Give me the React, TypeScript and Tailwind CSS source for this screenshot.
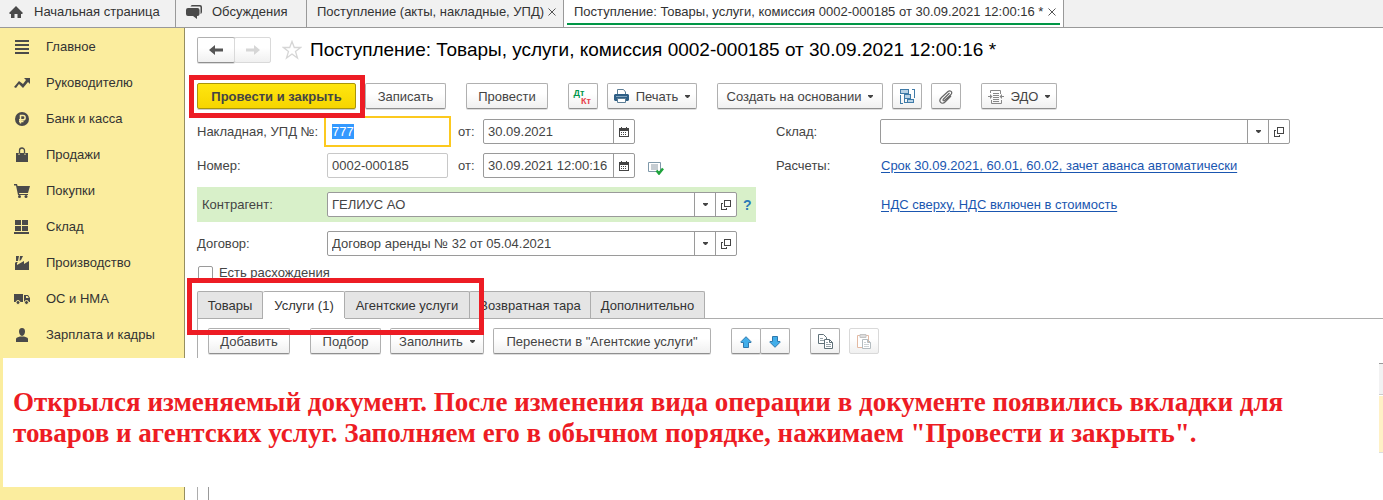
import { useEffect, useRef } from "react";
import type { ReactNode } from "react";
import clsx from "clsx";

/* ---------- icons ---------- */

const sectionIcons: Record<string, ReactNode> = {
  main: <path d="M1 1h14v2H1zM1 5h14v2H1zM1 9h14v2H1zM1 13h14v2H1z" />,
  chart: (
    <path d="M0 12l5-6 4 3 3-4-2-2h6v6l-2-2-5 6-4-4-3 4z" />
  ),
  ruble: (
    <>
      <circle cx="8" cy="8" r="7" />
      <path
        d="M6.5 12.5V4.5h2.5a2 2 0 0 1 0 4.300H5M5 10.500h4.500"
        fill="none"
        stroke="#fbed9e"
        strokeWidth="1.500"
      />
    </>
  ),
  bag: (
    <>
      <path d="M2 6h12v9H2z" />
      <path d="M5.500 8V3.500a2 2 0 0 1 5 0V8" fill="none" stroke="#4a4a4a" strokeWidth="1.300" />
      <path d="M5 6.500v1.500M11 6.500v1.500" stroke="#fbed9e" />
    </>
  ),
  cart: (
    <>
      <path d="M0 1h3l.6 2H16l-2 7H5l.3 1H14v1H4L2 2.500H0z" />
      <circle cx="5.500" cy="13.500" r="1.500" />
      <circle cx="12" cy="13.500" r="1.500" />
    </>
  ),
  store: <path d="M1 1h6v5H1zM8 1h6v5H8zM1 7h6v5H1zM8 7h6v5H8zM0 13h15v2H0z" />,
  factory: <path d="M1 15V8l1-1h2l-1 1v2l7-4v3l5-3v9zM2 1h3l-1 5H2zM6 1h3L7 5 5.500 6z" />,
  truck: (
    <>
      <path d="M0 3h9v8H0zM10 4h4l2 3v4h-6z" />
      <path d="M12 5h1.500l1.300 2H12z" fill="#fbed9e" />
      <circle cx="4" cy="11.500" r="2" stroke="#fbed9e" />
      <circle cx="12.500" cy="11.500" r="2" stroke="#fbed9e" />
    </>
  ),
  person: (
    <>
      <path d="M8 1c2.200 0 3 1.500 3 3.500S9.800 9 8 9 5 6.500 5 4.500 5.800 1 8 1z" />
      <path d="M2 15v-3c0-1.500 2-2 4-2.500h4c2 .5 4 1 4 2.500v3z" />
    </>
  ),
};

const HomeIcon = () => (
  <svg className="h-4 w-4 shrink-0" viewBox="0 0 16 16" fill="#4a4a4a">
    <path d="M8 2l7 7-1 1h-1v4H9.500v-4h-3v4H3v-4H2L1 9z" />
  </svg>
);

const ChatIcon = () => (
  <svg className="h-4 w-4 shrink-0" viewBox="0 0 16 16" fill="#4a4a4a">
    <path d="M6 1h8q2 0 2 2v5q0 1.500-1.500 2V3.500q0-1-1-1H4.500Q5 1 6 1z" />
    <path d="M2 4h9.500q2 0 2 2v4q0 2-2 2H11v3l-4-3H2q-2 0-2-2V6q0-2 2-2z" />
  </svg>
);

const ArrowIcon = ({ flip, color }: { flip?: boolean; color: string }) => (
  <svg className={clsx("h-3 w-[14px]", flip && "rotate-180")} viewBox="0 0 14 12" fill={color}>
    <path d="M0 6l6-5v3.500h8v3H6V11z" />
  </svg>
);

const StarIcon = () => (
  <svg className="h-5 w-5" viewBox="0 0 20 20" fill="none" stroke="#d6d6d6" strokeWidth="1.300">
    <path d="M10 1.500l2.300 6h6.200l-5 4 2 6.500-5.500-4L4.500 18l2-6.500-5-4h6.200z" />
  </svg>
);

const Caret = () => (
  <svg className="h-[3px] w-[5px] shrink-0" viewBox="0 0 5 3" fill="#444">
    <path d="M0 0h5v1L3 3H2L0 1z" />
  </svg>
);

const OpenIcon = () => (
  <svg className="h-[10px] w-[10px]" viewBox="0 0 10 10" fill="none" stroke="#444" shapeRendering="crispEdges">
    <path d="M3.500 .5h6v6h-6zM2 3.500H.5v6h5V8" />
  </svg>
);

const CalendarIcon = () => (
  <svg className="h-[10px] w-[10px]" viewBox="0 0 10 10" shapeRendering="crispEdges">
    <path d="M.5 1.500h9v8h-9z" fill="#fff" stroke="#444" />
    <path d="M0 1h10v3H0zM2 0h1v1H2zM7 0h1v1H7z" fill="#444" />
    <path d="M2 5h1v1H2zM4 5h1v1H4zM6 5h1v1H6zM2 7h1v1H2zM4 7h1v1H4zM6 7h1v1H6z" fill="#444" />
  </svg>
);

const PrinterIcon = () => (
  <svg className="h-[15px] w-[15px] shrink-0" viewBox="0 0 15 15">
    <path d="M3.500 5V.5h6L11.500 3v3" fill="#fff" stroke="#5b7d95" />
    <path d="M1 5h13l1 1v5l-1 1H1l-1-1V6z" fill="#2f5f86" />
    <path d="M2 7.500h11" stroke="#7fa3bf" />
    <path d="M3.500 9.500h8v4h-8z" fill="#fff" stroke="#5b7d95" />
  </svg>
);

const StructureIcon = () => (
  <svg className="h-[15px] w-[15px]" viewBox="0 0 15 15" fill="#b9d3e6" stroke="#3f7ba8" shapeRendering="crispEdges">
    <path d="M.5 6v8.500H3M12 .5h2.500V9M4.500 4v9.500H8M7 4v3" fill="none" />
    <path d="M.5.500h8v4h-8zM4.500 5.500h6v4h-6zM7.500 10.500h6v3h-6z" />
  </svg>
);

const ClipIcon = () => (
  <svg className="h-[14px] w-[14px]" viewBox="0 0 14 14" fill="none" stroke="#666" strokeWidth="1.200">
    <path d="M10.500 3L4.500 9c-1 1-.2 2.300 1 1.500l6.500-6c2-2.500-.8-4.800-3-3L2.500 7.500c-4 4 .5 7.500 3.500 4.500l6-6" />
  </svg>
);

const ExchangeIcon = () => (
  <svg className="h-4 w-4 shrink-0" viewBox="0 0 16 16" fill="none" stroke="#888">
    <path d="M2.500 4V1.500h10V5M13.500 11v3.500h-10V11M5 4.500h6M5 6.500h6M5 8.500h6M5 10.500h6M5 12.500h6" />
    <path d="M0 7.500h3M13 7.500h3" />
    <path d="M2 5l2.500 2.500L2 10zM14 5l-2.500 2.500L14 10z" fill="#888" stroke="none" />
  </svg>
);

const PostedIcon = () => (
  <svg className="h-[14px] w-4" viewBox="0 0 16 14" fill="none">
    <path d="M.5 1.500h12v9H.5z" stroke="#7f99aa" />
    <path d="M3 4h7M3 6h7M3 8h7" stroke="#8b9aa5" />
    <path d="M8.500 9.500l2.500 3L15 7.500" stroke="#1fa33c" strokeWidth="2.500" />
  </svg>
);

const BlueArrow = ({ down }: { down?: boolean }) => (
  <svg className={clsx("h-3 w-3", down && "rotate-180")} viewBox="0 0 12 12" fill="#41aeea" stroke="#2f78ad">
    <path d="M6 .7l5 5v.8H8.500v5h-5v-5H1v-.8z" />
  </svg>
);

const CopyIcon = () => (
  <svg className="h-[15px] w-[15px]" viewBox="0 0 15 15" fill="#fff" stroke="#5f7078">
    <path d="M.5.5h5l3 3v6h-8z" />
    <path d="M2 4.500h3M2 6.500h4" stroke="#98a4aa" />
    <path d="M6.500 5.500h5l3 3v6h-8zM11.500 5.500v3h3" />
    <path d="M8 8.500h2M8 10.500h5M8 12.500h5" stroke="#98a4aa" />
  </svg>
);

const PasteIcon = () => (
  <svg className="h-[15px] w-[15px]" viewBox="0 0 15 15" fill="#fff">
    <path d="M.5 1.500h11v12H.5z" stroke="#e3b9a2" />
    <path d="M3 .5h6v3H3z" fill="#ddd" stroke="#c4c4c4" />
    <path d="M5.500 5.500h5l3 3v6h-8zM10.500 5.500v3h3" stroke="#b4bcc0" />
    <path d="M7 8.500h2M7 10.500h5M7 12.500h5" stroke="#cdd2d5" />
  </svg>
);

/* ---------- controls ---------- */

type ButtonProps = {
  children: ReactNode;
  className?: string;
  label?: string;
  disabled?: boolean;
};

const Button = ({ children, className, label, disabled }: ButtonProps) => (
  <button
    type="button"
    aria-label={label}
    disabled={disabled}
    className={clsx(
      "flex h-[26px] shrink-0 items-center justify-center whitespace-nowrap rounded-xs border bg-linear-to-b from-white from-40% to-[#f0f0f0] pt-px",
      disabled ? "border-[#d9d9d9]" : "border-[#b0b0b0] border-b-[#8f8f8f] shadow-[0_1px_0_#ddd]",
      className
    )}
  >
    {children}
  </button>
);

type FieldProps = {
  id: string;
  value?: string;
  className?: string;
  buttons: { label: string; icon: ReactNode }[];
};

const Field = ({ id, value = "", className, buttons }: FieldProps) => (
  <div className={clsx("flex h-[25px] rounded-xs border border-[#9a9a9a] bg-white", className)}>
    <input id={id} defaultValue={value} className="min-w-0 flex-1 px-1 outline-none" />
    {buttons.map((button) => (
      <button
        key={button.label}
        type="button"
        aria-label={button.label}
        className="flex w-[21px] shrink-0 items-center justify-center border-l border-[#9a9a9a]"
      >
        {button.icon}
      </button>
    ))}
  </div>
);

const comboButtons = [
  { label: "Выбрать", icon: <Caret /> },
  { label: "Открыть", icon: <OpenIcon /> },
];
const dateButtons = [{ label: "Календарь", icon: <CalendarIcon /> }];

/* ---------- page parts ---------- */

const windowTabs = [
  { title: "Начальная страница", icon: <HomeIcon />, className: "w-[176px] pl-2" },
  { title: "Обсуждения", icon: <ChatIcon />, className: "w-[131px] pl-[10px]" },
  { title: "Поступление (акты, накладные, УПД)", closable: true, className: "w-[257px] pl-[10px]" },
  {
    title: "Поступление: Товары, услуги, комиссия 0002-000185 от 30.09.2021 12:00:16 *",
    closable: true,
    active: true,
    className: "w-[500px] pl-[10px]",
  },
];

const WindowTabs = () => (
  <nav className="flex h-7 border-b border-[#999] bg-[#f1f1f1] text-[#333]">
    {windowTabs.map((tab) => (
      <button
        key={tab.title}
        type="button"
        className={clsx(
          "relative flex shrink-0 items-center whitespace-nowrap border-r border-[#999] pb-[3px]",
          tab.active && "bg-white",
          tab.className
        )}
      >
        {tab.icon}
        <span className={tab.icon ? "ml-[10px]" : ""}>{tab.title}</span>
        {tab.closable && (
          <svg className="ml-auto mr-[7px] h-2 w-2" viewBox="0 0 8 8" stroke="#555">
            <path d="M.5.5l7 7M7.500.5l-7 7" />
          </svg>
        )}
        {tab.active && <span className="absolute inset-x-[3px] bottom-[2px] h-[2px] bg-[#009646]" />}
      </button>
    ))}
  </nav>
);

const sections = [
  { title: "Главное", icon: "main" },
  { title: "Руководителю", icon: "chart" },
  { title: "Банк и касса", icon: "ruble" },
  { title: "Продажи", icon: "bag" },
  { title: "Покупки", icon: "cart" },
  { title: "Склад", icon: "store" },
  { title: "Производство", icon: "factory" },
  { title: "ОС и НМА", icon: "truck" },
  { title: "Зарплата и кадры", icon: "person" },
];

const Sidebar = () => (
  <aside className="w-[185px] shrink-0 border-r border-[#968e60] bg-[#fbed9e] pt-px text-[#333]">
    <ul>
      {sections.map((section) => (
        <li key={section.title}>
          <a href="#" className="flex h-9 items-center gap-4 pl-[14px]">
            <svg className="h-4 w-4" viewBox="0 0 16 16" fill="#4a4a4a">
              {sectionIcons[section.icon]}
            </svg>
            {section.title}
          </a>
        </li>
      ))}
    </ul>
  </aside>
);

const CommandBar = () => (
  <div className="mt-[21px] flex">
    <div className="relative">
      <button
        type="button"
        className="h-[26px] w-[159px] whitespace-nowrap rounded-xs border border-[#a8940c] bg-linear-to-b from-[#ffe60f] to-[#f6d500] pt-px font-bold text-[#444] shadow-[0_1px_0_#ccc]"
      >
        Провести и закрыть
      </button>
      <span className="pointer-events-none absolute -bottom-[9px] -left-2 -right-[9px] -top-2 z-10 border-[5px] border-[#ed1c24]" />
    </div>
    <Button className="ml-[9px] w-[81px]">Записать</Button>
    <Button className="ml-5 w-[82px]">Провести</Button>
    <Button className="ml-5 w-[30px]" label="Дт Кт">
      <span className="flex flex-col text-[9px] font-bold leading-[8px]">
        <span className="pr-2 text-[#00964a]">Дт</span>
        <span className="pl-[6px] text-[#e8404a]">Кт</span>
      </span>
    </Button>
    <Button className="ml-[9px] w-[90px] gap-[7px]">
      <PrinterIcon />
      Печать
      <Caret />
    </Button>
    <Button className="ml-5 w-[166px] gap-[7px]">
      Создать на основании
      <Caret />
    </Button>
    <Button className="ml-[9px] w-[30px]" label="Структура подчиненности">
      <StructureIcon />
    </Button>
    <Button className="ml-[9px] w-[30px]" label="Присоединенные файлы">
      <ClipIcon />
    </Button>
    <Button className="ml-5 w-[76px] gap-[7px]">
      <ExchangeIcon />
      ЭДО
      <Caret />
    </Button>
  </div>
);

const DocumentForm = () => {
  const invoiceRef = useRef<HTMLInputElement>(null);

  useEffect(() => {
    invoiceRef.current?.focus();
    invoiceRef.current?.select();
  }, []);

  return (
    <form className="mt-[10px] flex gap-5">
      <div className="flex w-[559px] shrink-0 flex-col gap-[9px]">
        <div className="flex h-[25px] items-center">
          <label htmlFor="invoice" className="w-[130px] whitespace-nowrap">
            Накладная, УПД №:
          </label>
          <input
            id="invoice"
            ref={invoiceRef}
            defaultValue="777"
            className="h-[25px] w-[121px] bg-white px-[5px] outline-2 outline-offset-1 outline-[#fcc91f] selection:bg-[#3399ff] selection:text-white"
          />
          <label htmlFor="invoice-date" className="ml-[10px] w-[25px]">
            от:
          </label>
          <Field id="invoice-date" value="30.09.2021" className="w-[152px]" buttons={dateButtons} />
        </div>
        <div className="flex h-[25px] items-center">
          <label htmlFor="number" className="w-[130px]">
            Номер:
          </label>
          <input
            id="number"
            defaultValue="0002-000185"
            className="h-[25px] w-[121px] rounded-xs border border-[#c8c8c8] bg-white px-1 outline-none"
          />
          <label htmlFor="date" className="ml-[10px] w-[25px]">
            от:
          </label>
          <Field id="date" value="30.09.2021 12:00:16" className="w-[152px]" buttons={dateButtons} />
          <span className="ml-[13px] mt-1">
            <PostedIcon />
          </span>
        </div>
        <div className="flex h-[35px] items-center bg-[#d8f0c9] pl-[5px]">
          <label htmlFor="partner" className="w-[125px]">
            Контрагент:
          </label>
          <Field id="partner" value="ГЕЛИУС АО" className="w-[410px]" buttons={comboButtons} />
          <button type="button" className="ml-[6px] text-sm font-bold text-[#2a7ab8]">
            ?
          </button>
        </div>
        <div className="flex h-[25px] items-center">
          <label htmlFor="contract" className="w-[130px]">
            Договор:
          </label>
          <Field
            id="contract"
            value="Договор аренды № 32 от 05.04.2021"
            className="w-[410px]"
            buttons={comboButtons}
          />
        </div>
        <label className="flex h-4 items-center gap-[6px] pl-px">
          <input
            type="checkbox"
            className="h-[15px] w-[15px] appearance-none rounded-xs border border-[#9a9a9a] bg-white"
          />
          Есть расхождения
        </label>
      </div>
      <div className="flex flex-col gap-[9px]">
        <div className="flex h-[25px] items-center">
          <label htmlFor="warehouse" className="w-[104px]">
            Склад:
          </label>
          <Field id="warehouse" className="w-[410px]" buttons={comboButtons} />
        </div>
        <div className="flex h-[25px] items-center">
          <span className="w-[105px]">Расчеты:</span>
          <a href="#" className="whitespace-nowrap text-[#1a56b0] underline underline-offset-2">
            Срок 30.09.2021, 60.01, 60.02, зачет аванса автоматически
          </a>
        </div>
        <div className="flex h-[35px] items-center pl-[105px]">
          <a href="#" className="whitespace-nowrap text-[#1a56b0] underline underline-offset-2">
            НДС сверху, НДС включен в стоимость
          </a>
        </div>
      </div>
    </form>
  );
};

const pages = [
  { title: "Товары", className: "w-[66px]" },
  { title: "Услуги (1)", className: "w-[82px]", active: true },
  { title: "Агентские услуги", className: "w-[126px]" },
  { title: "Возвратная тара", className: "w-[122px]" },
  { title: "Дополнительно", className: "w-[115px]" },
];

const PageTabs = () => (
  <div role="tablist" className="relative mt-[10px] flex h-7 border-b border-[#adadad] text-[#333]">
    {pages.map((page) => (
      <button
        key={page.title}
        type="button"
        role="tab"
        aria-selected={!!page.active}
        className={clsx(
          "shrink-0 whitespace-nowrap rounded-t-xs border-t border-[#adadad]",
          page.active ? "-mb-px bg-white pt-px" : "border-x bg-[#e5e5e5] pt-[2px] not-first:-ml-px",
          page.className
        )}
      >
        {page.title}
      </button>
    ))}
    <span className="pointer-events-none absolute -left-[10px] -top-[13px] z-10 h-[57px] w-[297px] border-[5px] border-[#ed1c24]" />
  </div>
);

const ServicesPanel = () => (
  <div className="flex flex-1 flex-col border-l border-[#adadad] pl-[10px] pt-[9px]">
    <div className="flex">
      <Button className="w-[82px]">Добавить</Button>
      <Button className="ml-5 w-[71px]">Подбор</Button>
      <Button className="ml-[9px] w-[94px] gap-[7px]">
        Заполнить
        <Caret />
      </Button>
      <Button className="ml-[9px] w-[218px]">Перенести в "Агентские услуги"</Button>
      <Button className="ml-5 w-[30px]" label="Вверх">
        <BlueArrow />
      </Button>
      <Button className="-ml-px w-[30px]" label="Вниз">
        <BlueArrow down />
      </Button>
      <Button className="ml-5 w-[30px]" label="Копировать">
        <CopyIcon />
      </Button>
      <Button className="ml-[9px] w-[30px]" label="Вставить" disabled>
        <PasteIcon />
      </Button>
    </div>
    <div className="mt-[9px] flex-1 border-l border-t border-[#999]">
      <div className="h-[31px] border-b border-[#ccc] bg-[#f2f2f2]" />
      <div className="mt-px h-[57px] border-b border-[#ddd] bg-[#fff1c6]" />
    </div>
  </div>
);

const Note = () => (
  <p className="absolute left-[3px] right-1 top-[358px] z-20 bg-white pb-[38px] pl-[10px] pt-[29px] font-['Liberation_Serif',serif] text-[27px] font-bold leading-[31px] text-[#ed1c24]">
    Открылся изменяемый документ. После изменения вида операции в документе появились вкладки для
    товаров и агентских услуг. Заполняем его в обычном порядке, нажимаем "Провести и закрыть".
  </p>
);

const App = () => {
  return (
    <div className="relative flex min-h-screen flex-col overflow-hidden bg-white font-['Liberation_Sans',Arial,sans-serif] text-[13px] leading-4 text-[#444]">
      <WindowTabs />
      <div className="flex flex-1">
        <Sidebar />
        <main className="flex min-w-0 flex-1 flex-col pl-3 pt-[9px]">
          <div className="flex h-[25px] items-center">
            <Button className="w-[38px]" label="Назад">
              <ArrowIcon color="#555" />
            </Button>
            <Button className="-ml-px w-[37px]" label="Вперед" disabled>
              <ArrowIcon flip color="#d6d6d6" />
            </Button>
            <button type="button" aria-label="В избранное" className="ml-[11px]">
              <StarIcon />
            </button>
            <h1 className="ml-2 whitespace-nowrap text-[19px] leading-6 text-black">
              Поступление: Товары, услуги, комиссия 0002-000185 от 30.09.2021 12:00:16 *
            </h1>
          </div>
          <CommandBar />
          <DocumentForm />
          <PageTabs />
          <ServicesPanel />
        </main>
      </div>
      <Note />
    </div>
  );
};

export default App;
